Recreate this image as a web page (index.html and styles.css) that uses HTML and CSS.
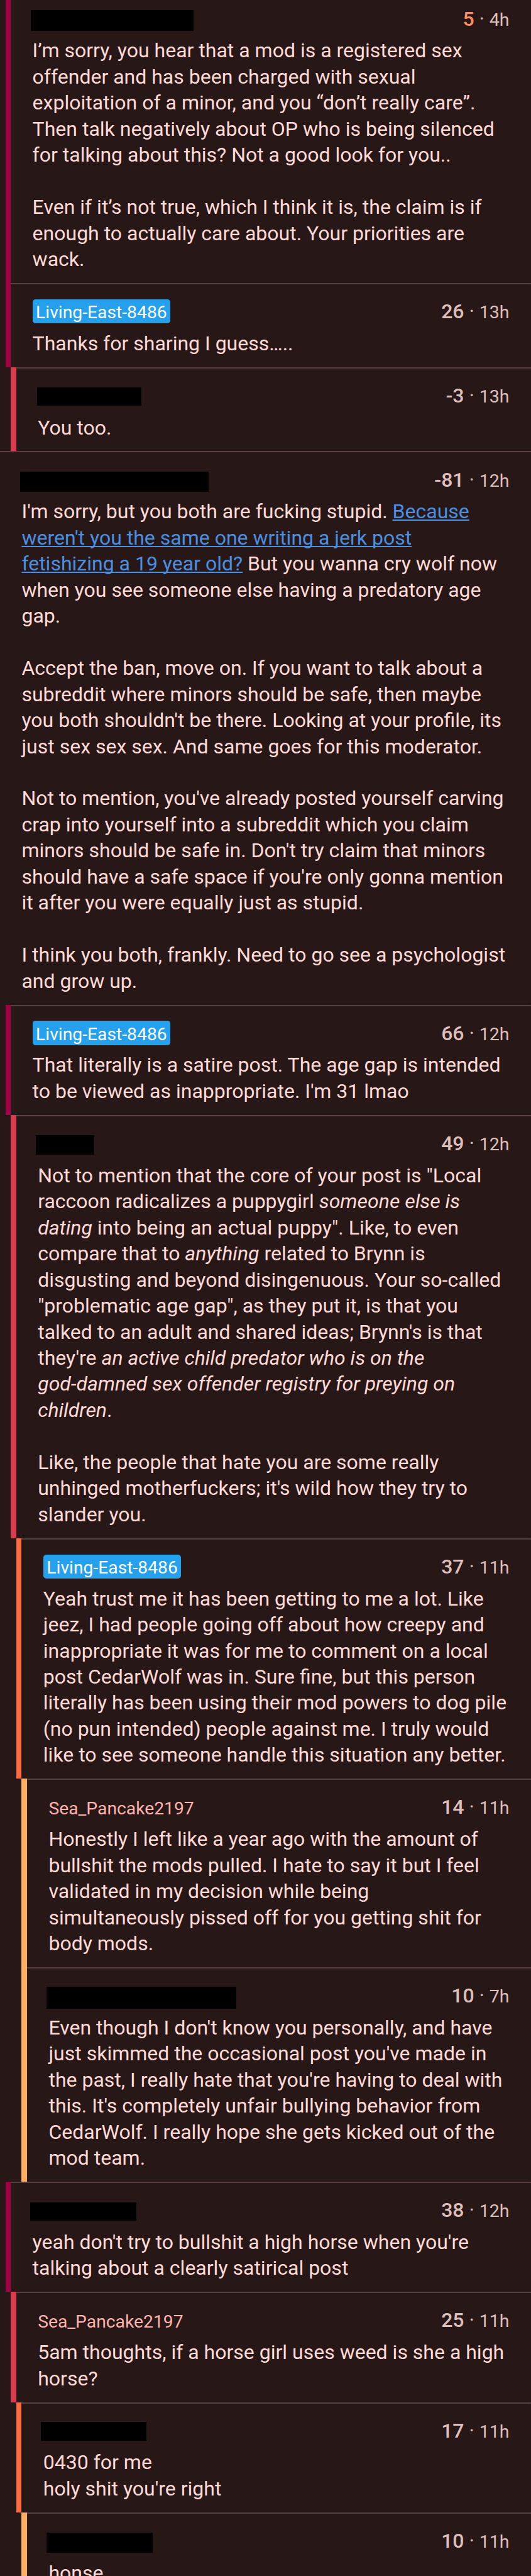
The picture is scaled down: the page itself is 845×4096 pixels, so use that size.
FILE: index.html
```html
<!DOCTYPE html>
<html lang="en">
<head>
<meta charset="utf-8">
<title>Comments</title>
<link rel="stylesheet" href="styles.css">
</head>
<body>
<main class="thread">
<article class="comment level-1 first"><div class="content">
<header class="head"><span class="redacted r1"></span><span class="meta"><b class="score upvoted">5</b> · <span class="time">4h</span></span></header>
<p class="text">I’m sorry, you hear that a mod is a registered sex
offender and has been charged with sexual
exploitation of a minor, and you “don’t really care”.
Then talk negatively about OP who is being silenced
for talking about this? Not a good look for you..

Even if it’s not true, which I think it is, the claim is if
enough to actually care about. Your priorities are
wack.</p>
</div></article>
<article class="comment level-1"><div class="content">
<header class="head"><span class="author op">Living-East-8486</span><span class="meta"><b class="score">26</b> · <span class="time">13h</span></span></header>
<p class="text">Thanks for sharing I guess…..</p>
</div></article>
<article class="comment level-2"><div class="content">
<header class="head"><span class="redacted r2"></span><span class="meta"><b class="score">-3</b> · <span class="time">13h</span></span></header>
<p class="text">You too.</p>
</div></article>
<article class="comment level-0"><div class="content">
<header class="head"><span class="redacted r3"></span><span class="meta"><b class="score">-81</b> · <span class="time">12h</span></span></header>
<p class="text">I'm sorry, but you both are fucking stupid. <a class="link">Because
weren't you the same one writing a jerk post
fetishizing a 19 year old?</a> But you wanna cry wolf now
when you see someone else having a predatory age
gap.

Accept the ban, move on. If you want to talk about a
subreddit where minors should be safe, then maybe
you both shouldn't be there. Looking at your profile, its
just sex sex sex. And same goes for this moderator.

Not to mention, you've already posted yourself carving
crap into yourself into a subreddit which you claim
minors should be safe in. Don't try claim that minors
should have a safe space if you're only gonna mention
it after you were equally just as stupid.

I think you both, frankly. Need to go see a psychologist
and grow up.</p>
</div></article>
<article class="comment level-1"><div class="content">
<header class="head"><span class="author op">Living-East-8486</span><span class="meta"><b class="score">66</b> · <span class="time">12h</span></span></header>
<p class="text">That literally is a satire post. The age gap is intended
to be viewed as inappropriate. I'm 31 lmao</p>
</div></article>
<article class="comment level-2"><div class="content">
<header class="head"><span class="redacted r4"></span><span class="meta"><b class="score">49</b> · <span class="time">12h</span></span></header>
<p class="text">Not to mention that the core of your post is "Local
raccoon radicalizes a puppygirl <em>someone else is
dating</em> into being an actual puppy". Like, to even
compare that to <em>anything</em> related to Brynn is
disgusting and beyond disingenuous. Your so-called
"problematic age gap", as they put it, is that you
talked to an adult and shared ideas; Brynn's is that
they're <em>an active child predator who is on the
god-damned sex offender registry for preying on
children</em>.

Like, the people that hate you are some really
unhinged motherfuckers; it's wild how they try to
slander you.</p>
</div></article>
<article class="comment level-3"><div class="content">
<header class="head"><span class="author op">Living-East-8486</span><span class="meta"><b class="score">37</b> · <span class="time">11h</span></span></header>
<p class="text">Yeah trust me it has been getting to me a lot. Like
jeez, I had people going off about how creepy and
inappropriate it was for me to comment on a local
post CedarWolf was in. Sure fine, but this person
literally has been using their mod powers to dog pile
(no pun intended) people against me. I truly would
like to see someone handle this situation any better.</p>
</div></article>
<article class="comment level-4"><div class="content">
<header class="head"><span class="author">Sea_Pancake2197</span><span class="meta"><b class="score">14</b> · <span class="time">11h</span></span></header>
<p class="text">Honestly I left like a year ago with the amount of
bullshit the mods pulled. I hate to say it but I feel
validated in my decision while being
simultaneously pissed off for you getting shit for
body mods.</p>
</div></article>
<article class="comment level-4"><div class="content">
<header class="head"><span class="redacted r5"></span><span class="meta"><b class="score">10</b> · <span class="time">7h</span></span></header>
<p class="text">Even though I don't know you personally, and have
just skimmed the occasional post you've made in
the past, I really hate that you're having to deal with
this. It's completely unfair bullying behavior from
CedarWolf. I really hope she gets kicked out of the
mod team.</p>
</div></article>
<article class="comment level-1"><div class="content">
<header class="head"><span class="redacted r6"></span><span class="meta"><b class="score">38</b> · <span class="time">12h</span></span></header>
<p class="text">yeah don't try to bullshit a high horse when you're
talking about a clearly satirical post</p>
</div></article>
<article class="comment level-2"><div class="content">
<header class="head"><span class="author">Sea_Pancake2197</span><span class="meta"><b class="score">25</b> · <span class="time">11h</span></span></header>
<p class="text">5am thoughts, if a horse girl uses weed is she a high
horse?</p>
</div></article>
<article class="comment level-3"><div class="content">
<header class="head"><span class="redacted r7"></span><span class="meta"><b class="score">17</b> · <span class="time">11h</span></span></header>
<p class="text">0430 for me
holy shit you're right</p>
</div></article>
<article class="comment level-4"><div class="content">
<header class="head"><span class="redacted r8"></span><span class="meta"><b class="score">10</b> · <span class="time">11h</span></span></header>
<p class="text">honse</p>
</div></article>
</main>
</body>
</html>
```
FILE: styles.css
```css
:root {
  --u: 0.78241px;
  --bar: calc(11 * var(--u));
}
* { box-sizing: border-box; }
body {
  margin: 0;
  background: #271716;
  font-family: Roboto, "Liberation Sans", sans-serif;
}
.thread {
  height: 4096px;
  overflow: hidden;
  display: flow-root;
}
.comment {
  display: flex;
}
.comment::before {
  content: "";
  flex: none;
  width: var(--bar);
  background: var(--rail);
}
.first { margin-top: calc(-20 * var(--u)); }

/* Nesting depth: indent plus a coloured rail */
.level-0::before { display: none; }
.level-1 { margin-left: var(--bar); --rail: #a00044; }
.level-2 { margin-left: calc(2 * var(--bar)); --rail: #d93b4f; }
.level-3 { margin-left: calc(3 * var(--bar)); --rail: #fa6b40; }
.level-4 { margin-left: calc(4 * var(--bar)); --rail: #ffad5f; }

.content {
  flex: 1;
  min-width: 0;
  padding: calc(33 * var(--u)) calc(44 * var(--u)) calc(21 * var(--u));
  background: linear-gradient(#574140, #574140) top / 100% calc(3 * var(--u)) no-repeat;
}
.head {
  display: flex;
  align-items: flex-start;
  justify-content: space-between;
  height: calc(49 * var(--u));
  margin-bottom: calc(15 * var(--u));
  font-size: calc(36.15 * var(--u));
  line-height: calc(45 * var(--u));
  white-space: nowrap;
}
.author {
  padding-top: calc(4.5 * var(--u));
  color: #ffb3ae;
}
.op {
  height: calc(49 * var(--u));
  padding-left: calc(7 * var(--u));
  padding-right: calc(7 * var(--u));
  border-radius: calc(6 * var(--u));
  background: #24a0ed;
  color: #fff;
}
.meta {
  margin-left: auto;
  padding-top: calc(3 * var(--u));
  color: #dfbfbc;
  font-size: calc(40.9 * var(--u));
}
.score { font-weight: 500; }
.upvoted { color: #ff8b60; }
.time {
  font-size: calc(36.5 * var(--u));
  line-height: 1px;
}
.text {
  margin: 0;
  color: #ffdad7;
  font-size: calc(40.9 * var(--u));
  line-height: calc(53 * var(--u));
  white-space: pre;
}
.link {
  color: #4a90e2;
  text-decoration: underline;
  text-decoration-skip-ink: none;
  text-decoration-thickness: calc(2.2 * var(--u));
  text-underline-offset: calc(3 * var(--u));
}

/* Blacked-out user names */
.redacted { background: #000; }
.r1 { width: calc(331 * var(--u)); height: calc(42 * var(--u)); margin: calc(8 * var(--u)) 0 0 calc(-3 * var(--u)); }
.r2 { width: calc(212 * var(--u)); height: calc(38 * var(--u)); margin: calc(8 * var(--u)) 0 0 calc(-2 * var(--u)); }
.r3 { width: calc(383 * var(--u)); height: calc(41 * var(--u)); margin: calc(9 * var(--u)) 0 0 calc(-3 * var(--u)); }
.r4 { width: calc(119 * var(--u)); height: calc(40 * var(--u)); margin: calc(8 * var(--u)) 0 0 calc(-4 * var(--u)); }
.r5 { width: calc(386 * var(--u)); height: calc(45 * var(--u)); margin: calc(7 * var(--u)) 0 0 calc(-4 * var(--u)); }
.r6 { width: calc(216 * var(--u)); height: calc(37 * var(--u)); margin: calc(9 * var(--u)) 0 0 calc(-4 * var(--u)); }
.r7 { width: calc(215 * var(--u)); height: calc(39 * var(--u)); margin: calc(7 * var(--u)) 0 0 calc(-5 * var(--u)); }
.r8 { width: calc(216 * var(--u)); height: calc(41 * var(--u)); margin: calc(8 * var(--u)) 0 0 calc(-5 * var(--u)); }
```
